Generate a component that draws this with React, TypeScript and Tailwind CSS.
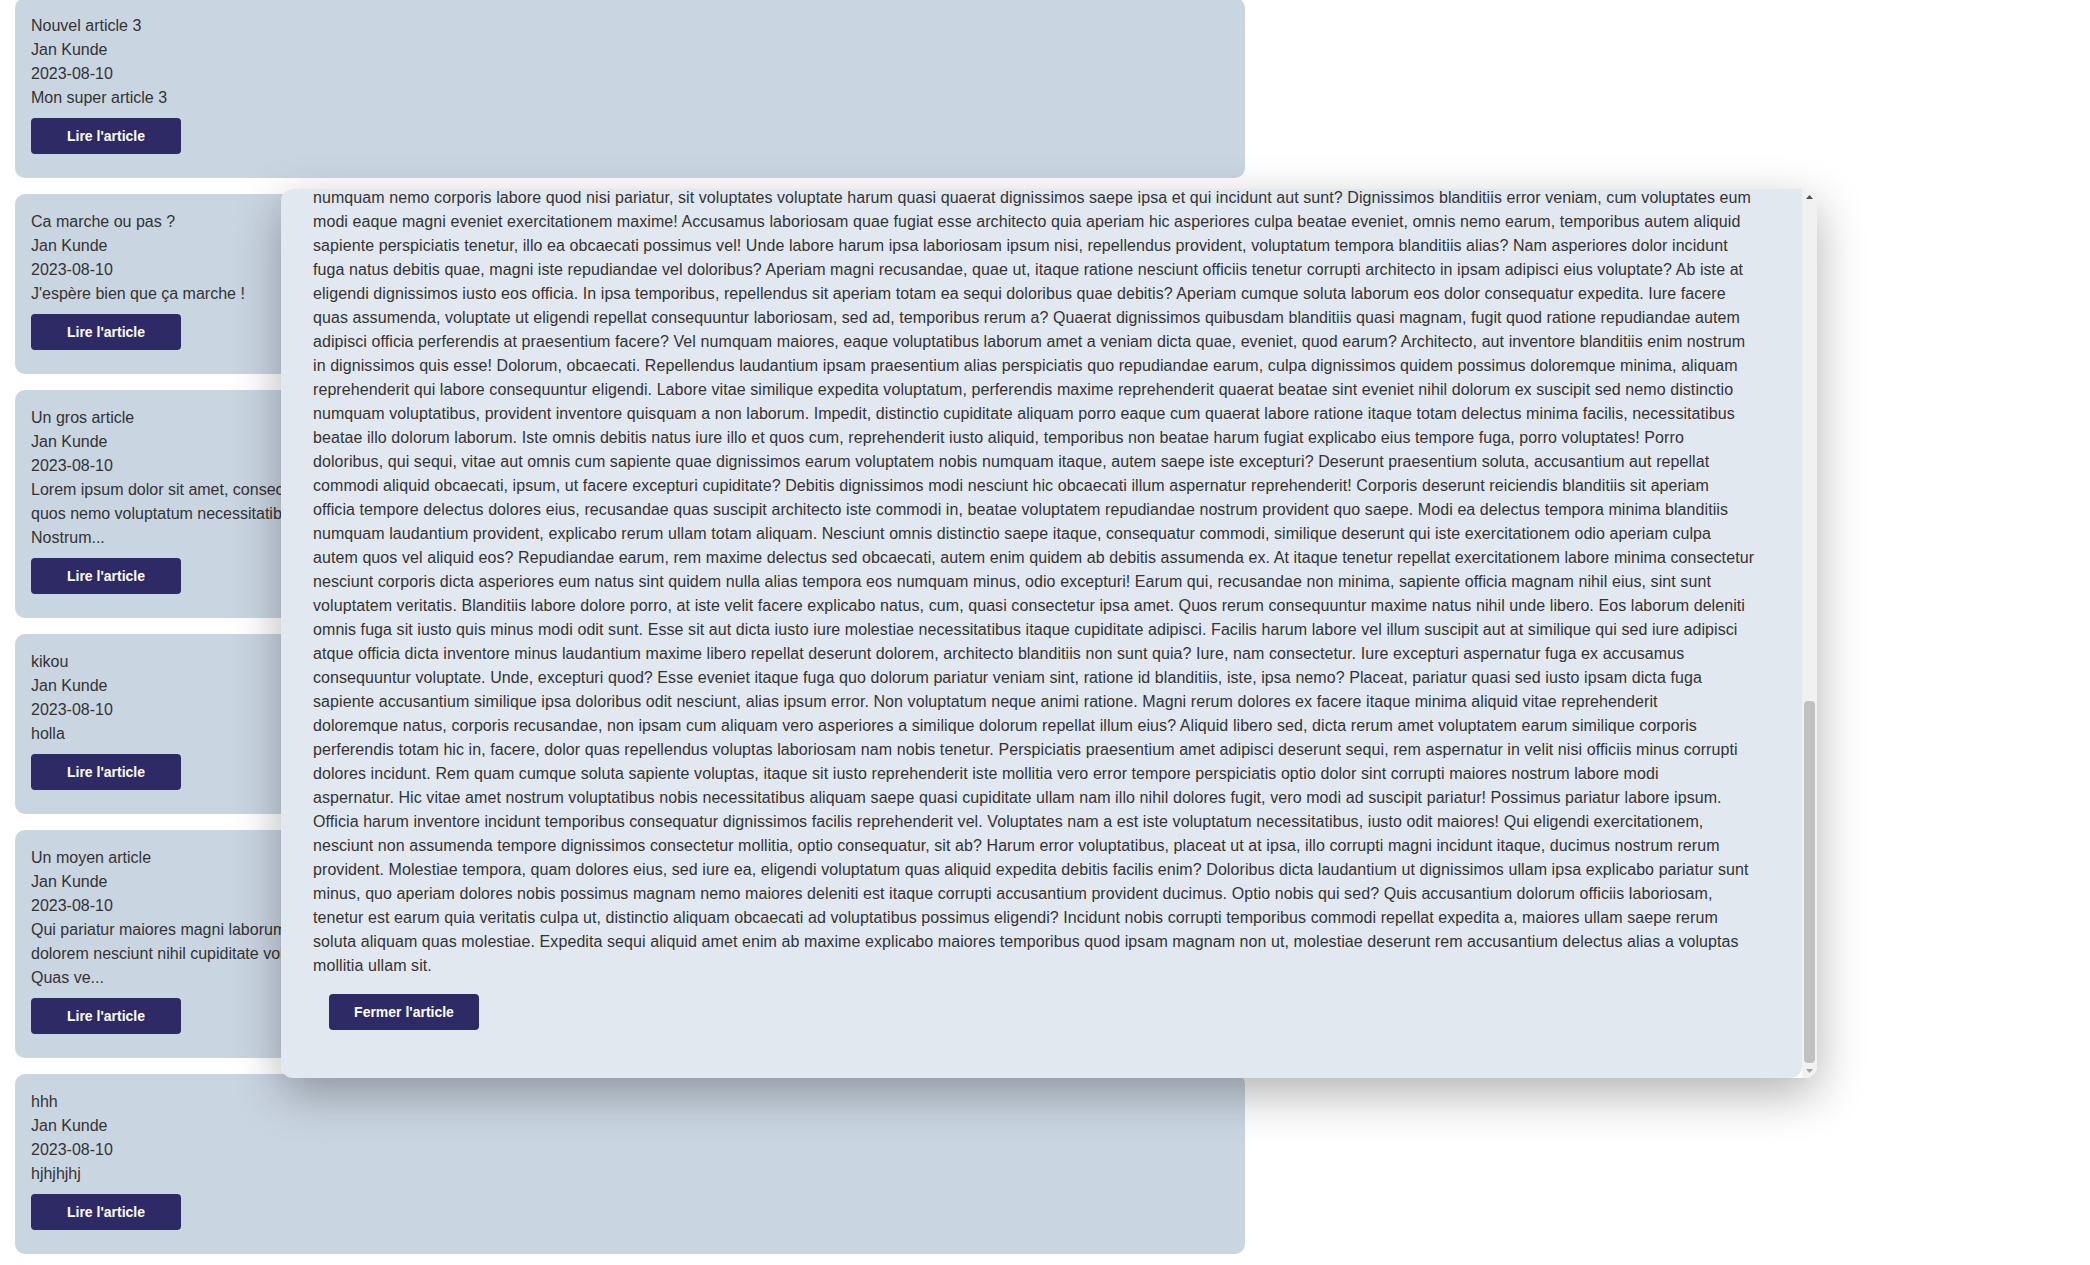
import { useLayoutEffect, useRef } from 'react';

type Article = {
    title: string;
    author: string;
    date: string;
    excerpt: string[];
};

const articles: Article[] = [
    { title: 'Nouvel article 3', author: 'Jan Kunde', date: '2023-08-10', excerpt: ['Mon super article 3'] },
    { title: 'Ca marche ou pas ?', author: 'Jan Kunde', date: '2023-08-10', excerpt: ["J'espère bien que ça marche !"] },
    {
        title: 'Un gros article',
        author: 'Jan Kunde',
        date: '2023-08-10',
        excerpt: [
            'Lorem ipsum dolor sit amet, consectetur adipisicing elit. Ipsam perspiciatis, deleniti eveniet atque, at iure hic eligendi officiis,',
            'quos nemo voluptatum necessitatibus reiciendis vero quae, tenetur voluptate assumenda doloribus cumque.',
            'Nostrum...',
        ],
    },
    { title: 'kikou', author: 'Jan Kunde', date: '2023-08-10', excerpt: ['holla'] },
    {
        title: 'Un moyen article',
        author: 'Jan Kunde',
        date: '2023-08-10',
        excerpt: [
            'Qui pariatur maiores magni laborum, sapiente nisi voluptatibus quae aliquam iusto beatae autem odio,',
            'dolorem nesciunt nihil cupiditate voluptas ratione eum expedita ipsa.',
            'Quas ve...',
        ],
    },
    { title: 'hhh', author: 'Jan Kunde', date: '2023-08-10', excerpt: ['hjhjhjhj'] },
];

// the open article, one entry per rendered line
const bodyLines = [
    'numquam nemo corporis labore quod nisi pariatur, sit voluptates voluptate harum quasi quaerat dignissimos saepe ipsa et qui incidunt aut sunt? Dignissimos blanditiis error veniam, cum voluptates eum',
    'modi eaque magni eveniet exercitationem maxime! Accusamus laboriosam quae fugiat esse architecto quia aperiam hic asperiores culpa beatae eveniet, omnis nemo earum, temporibus autem aliquid',
    'sapiente perspiciatis tenetur, illo ea obcaecati possimus vel! Unde labore harum ipsa laboriosam ipsum nisi, repellendus provident, voluptatum tempora blanditiis alias? Nam asperiores dolor incidunt',
    'fuga natus debitis quae, magni iste repudiandae vel doloribus? Aperiam magni recusandae, quae ut, itaque ratione nesciunt officiis tenetur corrupti architecto in ipsam adipisci eius voluptate? Ab iste at',
    'eligendi dignissimos iusto eos officia. In ipsa temporibus, repellendus sit aperiam totam ea sequi doloribus quae debitis? Aperiam cumque soluta laborum eos dolor consequatur expedita. Iure facere',
    'quas assumenda, voluptate ut eligendi repellat consequuntur laboriosam, sed ad, temporibus rerum a? Quaerat dignissimos quibusdam blanditiis quasi magnam, fugit quod ratione repudiandae autem',
    'adipisci officia perferendis at praesentium facere? Vel numquam maiores, eaque voluptatibus laborum amet a veniam dicta quae, eveniet, quod earum? Architecto, aut inventore blanditiis enim nostrum',
    'in dignissimos quis esse! Dolorum, obcaecati. Repellendus laudantium ipsam praesentium alias perspiciatis quo repudiandae earum, culpa dignissimos quidem possimus doloremque minima, aliquam',
    'reprehenderit qui labore consequuntur eligendi. Labore vitae similique expedita voluptatum, perferendis maxime reprehenderit quaerat beatae sint eveniet nihil dolorum ex suscipit sed nemo distinctio',
    'numquam voluptatibus, provident inventore quisquam a non laborum. Impedit, distinctio cupiditate aliquam porro eaque cum quaerat labore ratione itaque totam delectus minima facilis, necessitatibus',
    'beatae illo dolorum laborum. Iste omnis debitis natus iure illo et quos cum, reprehenderit iusto aliquid, temporibus non beatae harum fugiat explicabo eius tempore fuga, porro voluptates! Porro',
    'doloribus, qui sequi, vitae aut omnis cum sapiente quae dignissimos earum voluptatem nobis numquam itaque, autem saepe iste excepturi? Deserunt praesentium soluta, accusantium aut repellat',
    'commodi aliquid obcaecati, ipsum, ut facere excepturi cupiditate? Debitis dignissimos modi nesciunt hic obcaecati illum aspernatur reprehenderit! Corporis deserunt reiciendis blanditiis sit aperiam',
    'officia tempore delectus dolores eius, recusandae quas suscipit architecto iste commodi in, beatae voluptatem repudiandae nostrum provident quo saepe. Modi ea delectus tempora minima blanditiis',
    'numquam laudantium provident, explicabo rerum ullam totam aliquam. Nesciunt omnis distinctio saepe itaque, consequatur commodi, similique deserunt qui iste exercitationem odio aperiam culpa',
    'autem quos vel aliquid eos? Repudiandae earum, rem maxime delectus sed obcaecati, autem enim quidem ab debitis assumenda ex. At itaque tenetur repellat exercitationem labore minima consectetur',
    'nesciunt corporis dicta asperiores eum natus sint quidem nulla alias tempora eos numquam minus, odio excepturi! Earum qui, recusandae non minima, sapiente officia magnam nihil eius, sint sunt',
    'voluptatem veritatis. Blanditiis labore dolore porro, at iste velit facere explicabo natus, cum, quasi consectetur ipsa amet. Quos rerum consequuntur maxime natus nihil unde libero. Eos laborum deleniti',
    'omnis fuga sit iusto quis minus modi odit sunt. Esse sit aut dicta iusto iure molestiae necessitatibus itaque cupiditate adipisci. Facilis harum labore vel illum suscipit aut at similique qui sed iure adipisci',
    'atque officia dicta inventore minus laudantium maxime libero repellat deserunt dolorem, architecto blanditiis non sunt quia? Iure, nam consectetur. Iure excepturi aspernatur fuga ex accusamus',
    'consequuntur voluptate. Unde, excepturi quod? Esse eveniet itaque fuga quo dolorum pariatur veniam sint, ratione id blanditiis, iste, ipsa nemo? Placeat, pariatur quasi sed iusto ipsam dicta fuga',
    'sapiente accusantium similique ipsa doloribus odit nesciunt, alias ipsum error. Non voluptatum neque animi ratione. Magni rerum dolores ex facere itaque minima aliquid vitae reprehenderit',
    'doloremque natus, corporis recusandae, non ipsam cum aliquam vero asperiores a similique dolorum repellat illum eius? Aliquid libero sed, dicta rerum amet voluptatem earum similique corporis',
    'perferendis totam hic in, facere, dolor quas repellendus voluptas laboriosam nam nobis tenetur. Perspiciatis praesentium amet adipisci deserunt sequi, rem aspernatur in velit nisi officiis minus corrupti',
    'dolores incidunt. Rem quam cumque soluta sapiente voluptas, itaque sit iusto reprehenderit iste mollitia vero error tempore perspiciatis optio dolor sint corrupti maiores nostrum labore modi',
    'aspernatur. Hic vitae amet nostrum voluptatibus nobis necessitatibus aliquam saepe quasi cupiditate ullam nam illo nihil dolores fugit, vero modi ad suscipit pariatur! Possimus pariatur labore ipsum.',
    'Officia harum inventore incidunt temporibus consequatur dignissimos facilis reprehenderit vel. Voluptates nam a est iste voluptatum necessitatibus, iusto odit maiores! Qui eligendi exercitationem,',
    'nesciunt non assumenda tempore dignissimos consectetur mollitia, optio consequatur, sit ab? Harum error voluptatibus, placeat ut at ipsa, illo corrupti magni incidunt itaque, ducimus nostrum rerum',
    'provident. Molestiae tempora, quam dolores eius, sed iure ea, eligendi voluptatum quas aliquid expedita debitis facilis enim? Doloribus dicta laudantium ut dignissimos ullam ipsa explicabo pariatur sunt',
    'minus, quo aperiam dolores nobis possimus magnam nemo maiores deleniti est itaque corrupti accusantium provident ducimus. Optio nobis qui sed? Quis accusantium dolorum officiis laboriosam,',
    'tenetur est earum quia veritatis culpa ut, distinctio aliquam obcaecati ad voluptatibus possimus eligendi? Incidunt nobis corrupti temporibus commodi repellat expedita a, maiores ullam saepe rerum',
    'soluta aliquam quas molestiae. Expedita sequi aliquid amet enim ab maxime explicabo maiores temporibus quod ipsam magnam non ut, molestiae deserunt rem accusantium delectus alias a voluptas',
    'mollitia ullam sit.',
];

// start of the article, above what is scrolled into view
const openingLines = [
    'Lorem ipsum dolor sit amet, consectetur adipisicing elit. Ipsam perspiciatis, deleniti eveniet atque, at iure hic eligendi officiis, quos nemo voluptatum necessitatibus reiciendis vero quae, tenetur',
    ...bodyLines.slice(16, 32),
    ...bodyLines.slice(0, 30),
];

const ArticleCard = ({ article }: { article: Article }) => (
    <div className="w-[1230px] rounded-[10px] bg-slate-300 p-4">
        <div>{article.title}</div>
        <div>{article.author}</div>
        <div>{article.date}</div>
        {article.excerpt.map((line, i) => (
            <div key={i} className="whitespace-nowrap">{line}</div>
        ))}
        <button className="my-2 block h-9 w-[150px] rounded bg-[#2e2a65] text-sm font-bold text-white">
            Lire l'article
        </button>
    </div>
);

const Arrow = ({ down }: { down?: boolean }) => (
    <div className="flex h-[15px] items-center justify-center">
        <svg width="7" height="4" viewBox="0 0 7 4" className={down ? 'rotate-180' : ''}>
            <path d="M3.5 0L7 4H0z" fill={down ? '#a3a3a3' : '#505050'} />
        </svg>
    </div>
);

const ArticleModal = () => {
    const scrollRef = useRef<HTMLDivElement>(null);

    useLayoutEffect(() => {
        const el = scrollRef.current;
        if (el) el.scrollTop = el.scrollHeight;
    }, []);

    return (
        <div className="fixed left-[281px] top-[189px] flex h-[889px] w-[1536px] overflow-hidden rounded-xl shadow-[0_16px_48px_rgba(0,0,0,0.3)]">
            <div ref={scrollRef} className="flex-1 overflow-y-auto [scrollbar-width:none]">
                <div className="rounded-xl bg-slate-200 p-8 tracking-[0.08px]">
                    <div>Un gros article</div>
                    <div>Jan Kunde</div>
                    <div>2023-08-10</div>
                    {[...openingLines, ...bodyLines].map((line, i) => (
                        <div key={i} className="whitespace-nowrap">{line}</div>
                    ))}
                    <button className="m-4 block h-9 w-[150px] rounded bg-[#2e2a65] text-sm font-bold tracking-normal text-white">
                        Fermer l'article
                    </button>
                </div>
            </div>
            {/* scrollbar, scrolled to the end */}
            <div className="flex w-[15px] flex-col bg-[#f1f1f1]">
                <Arrow />
                <div className="flex flex-1 flex-col justify-end px-[2px]">
                    <div className="h-[362px] rounded-sm bg-[#c1c1c1]" />
                </div>
                <Arrow down />
            </div>
        </div>
    );
};

export default function App() {
    return (
        <div className="bg-white font-['Liberation_Sans',Arial,sans-serif] text-base leading-6 text-[#333]">
            <div className="-mt-[2px] flex flex-col gap-4 pl-[15px]">
                {articles.map((article) => (
                    <ArticleCard key={article.title} article={article} />
                ))}
            </div>
            <ArticleModal />
        </div>
    );
}
